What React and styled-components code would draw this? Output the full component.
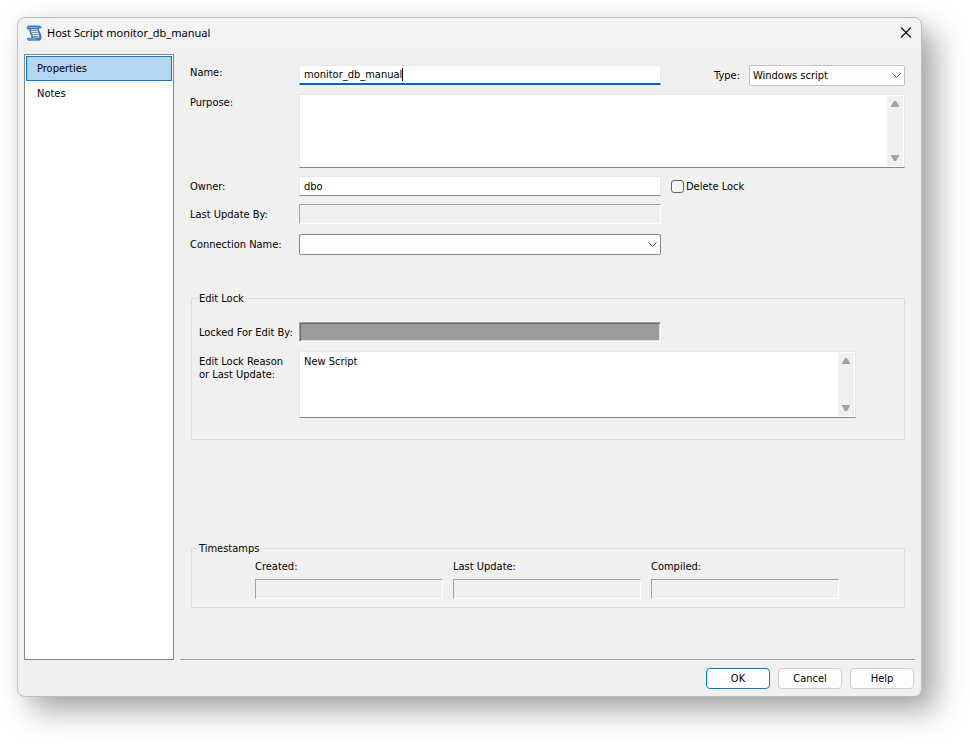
import React, { useState } from "react";
import styled, { createGlobalStyle, css } from "styled-components";

const GlobalStyle = createGlobalStyle`
  * {
    box-sizing: border-box;
  }

  body {
    margin: 0;
    background: #fff;
    color: #000;
  }

  body,
  button,
  input,
  select,
  textarea {
    font-family: "DejaVu Sans Condensed", Tahoma, sans-serif;
    font-size: 11px;
    line-height: 13px;
  }
`;

const Desktop = styled.div`
  display: flex;
  min-height: 100vh;
  padding: 17px 48px 48px 17px;
`;

const Dialog = styled.div`
  flex: 1;
  display: flex;
  flex-direction: column;
  background: #f0f0f0;
  border: 1px solid #bdbdbd;
  border-radius: 8px;
  box-shadow: 14px 14px 30px rgba(0, 0, 0, 0.34),
    0 0 16px rgba(0, 0, 0, 0.05);
`;

const TitleBar = styled.header`
  display: flex;
  align-items: center;
  gap: 4px;
  height: 30px;
  padding: 0 9px 0 8px;
  background: #f3f3f3;
  border-radius: 8px 8px 0 0;
`;

const Title = styled.h1`
  flex: 1;
  margin: 0;
  font-family: "Noto Sans", "Segoe UI", sans-serif;
  font-size: 11px;
  font-weight: 400;
  line-height: 16px;
`;

const CloseButton = styled.button`
  display: flex;
  padding: 0;
  border: none;
  background: none;
`;

const Body = styled.div`
  flex: 1;
  display: flex;
  gap: 6px;
  padding: 6px 6px 0;
`;

const Sidebar = styled.nav`
  width: 150px;
  padding: 1px;
  border: 1px solid #828790;
  background: #fff;
`;

const SidebarItem = styled.button`
  display: block;
  width: 100%;
  height: 25px;
  padding: 0 10px;
  border: 1px solid transparent;
  background: none;
  color: #000;
  text-align: left;

  ${({ $active }) =>
    $active &&
    css`
      border-color: #0078d7;
      background: #b3d7f3;
    `}
`;

const Main = styled.main`
  flex: 1;
  display: flex;
  flex-direction: column;
  padding: 11px 10px 51px;
  border-bottom: 1px solid #a0a0a0;
  box-shadow: 0 1px 0 #fff;
`;

const Form = styled.div`
  display: grid;
  grid-template-columns: 109px 1fr 88px 156px;
  row-gap: 8px;
`;

const Label = styled.label`
  grid-column: ${({ $col }) => $col || 1};
  padding-top: ${({ $top }) => $top || 4}px;
  white-space: pre-line;
`;

const TypeLabel = styled(Label)`
  padding-right: 9px;
  text-align: right;
`;

const FieldWrap = styled.div`
  position: relative;
  display: flex;
`;

const Caret = styled.span`
  position: absolute;
  left: 103px;
  top: 3px;
  width: 1px;
  height: 13px;
  background: #000;
`;

const fieldStyles = {
  plain: css`
    background: #fff;
    border-color: #e8e8e8 #e8e8e8 #868686;
  `,
  focused: css`
    background: #fff;
    border-color: #e8e8e8 #e8e8e8 #0067c0;
    border-bottom-width: 2px;
  `,
  disabled: css`
    background: #f0f0f0;
    border-color: #a0a0a0 #fff #fff #a0a0a0;
  `,
  locked: css`
    background: #9b9b9b;
    border-color: #a0a0a0 #fff #fff #a0a0a0;
    box-shadow: inset 1px 1px 0 #696969, inset -1px -1px 0 #e3e3e3;
  `,
};

const Field = styled.input`
  width: 100%;
  height: 20px;
  padding: 0 4px;
  border: 1px solid;
  border-radius: 0;
  color: #000;
  outline: none;
  ${({ $kind }) => fieldStyles[$kind || "plain"]}
`;

const SelectWrap = styled.div`
  position: relative;
  display: flex;
  margin-top: ${({ $top }) => $top || 0}px;

  svg {
    position: absolute;
    right: 4px;
    top: 7px;
    pointer-events: none;
  }
`;

const Select = styled.select`
  appearance: none;
  width: 100%;
  height: 21px;
  padding: 0 20px 0 3px;
  border: 1px solid ${({ $light }) => ($light ? "#c4c4c4" : "#868686")};
  border-radius: 2px;
  background: #fdfdfd;
  color: #000;
  outline: none;
`;

const MemoBox = styled.div`
  display: flex;
  grid-column: 2 / -1;
  height: ${({ $height }) => $height}px;
  padding: 1px 1px 1px 0;
  border: 1px solid;
  border-color: #e8e8e8 #e8e8e8 #868686;
  background: #fff;
`;

const Memo = styled.textarea`
  flex: 1;
  min-width: 0;
  margin: 0;
  padding: 2px 4px;
  border: none;
  background: none;
  color: #000;
  outline: none;
  resize: none;
  overflow: hidden;
`;

const ScrollTrack = styled.div`
  display: flex;
  flex-direction: column;
  justify-content: space-between;
  align-items: center;
  width: 16px;
  padding: 5px 0;
  background: #f0f0f0;
`;

const CheckLabel = styled.label`
  display: flex;
  align-items: center;
  gap: 2px;
  grid-column: span 2;
  padding-left: 10px;
`;

const Checkbox = styled.input`
  appearance: none;
  width: 13px;
  height: 13px;
  margin: 0;
  border: 1px solid #626262;
  border-radius: 3px;
  background: #f5f5f5;

  &:checked {
    background: #0067c0;
  }
`;

const Group = styled.fieldset`
  min-width: 0;
  margin: ${({ $margin }) => $margin};
  padding: 0 0 0 7px;
  border: 1px solid #dcdcdc;
`;

const Legend = styled.legend`
  margin-left: -1px;
  padding: 0 2px 0 1px;
`;

const LockGrid = styled.div`
  display: grid;
  grid-template-columns: 100px 1fr 195px;
  row-gap: 9px;
  padding: 17px 48px 21px 0;
`;

const LockedField = styled(Field)`
  grid-column: 2;
`;

const StampGrid = styled.div`
  display: grid;
  grid-template-columns: repeat(3, 1fr);
  gap: 10px;
  padding: 5px 65px 8px 56px;
`;

const Stamp = styled.div`
  display: flex;
  flex-direction: column;
  gap: 6px;
`;

const Footer = styled.footer`
  display: flex;
  justify-content: flex-end;
  gap: 8px;
  padding: 8px 7px 7px;
`;

const Button = styled.button`
  width: 64px;
  height: 21px;
  padding: 0;
  border: 1px solid ${({ $primary }) => ($primary ? "#0078d4" : "#cfcfcf")};
  border-radius: 4px;
  background: #fdfdfd;
  color: #000;
`;

const ScriptIcon = () => (
  <svg width="17" height="17" viewBox="0 0 17 17" fill="none" aria-hidden="true">
    <path
      d="M2.600 0.500H13c1.700 0 2.500 1.200 2.300 3H13c-.6 2 2.600 4.700 2.600 8.500 0 2.500-1 3.700-2.700 3.700H3C1.500 15.700.9 14.300 1.200 12.700h4C5.400 9.500 3 8 3.400 4.600 1.300 4.800.4 3.800.9 2 1.200 1 1.700.5 2.600.5z"
      fill="#3f7db9"
    />
    <path d="M5 4.200h6.300c0 3 2.200 5 2 8.200H7C7.200 9 4.600 7.500 5 4.200z" fill="#dce8f4" />
    <path d="M5 5.500h6M6 7.500h5.500M6.500 9.500H12M7 11.500h5.500" stroke="#6797c7" />
    <path d="M2.500 2.500h9" stroke="#84afd8" />
    <path d="M3 14h8" stroke="#84afd8" />
  </svg>
);

const CloseIcon = () => (
  <svg width="12" height="12" viewBox="0 0 12 12" aria-hidden="true">
    <path d="M1 0.500l10 10M11 .5L1 10.500" stroke="#111" strokeWidth="1.200" />
  </svg>
);

const Chevron = () => (
  <svg width="9" height="7" viewBox="0 0 9 7" fill="none" aria-hidden="true">
    <path d="M.5 1.500l4 4 4-4" stroke="#5c5c5c" />
  </svg>
);

const Arrow = ({ down }) => (
  <svg width="8" height="6" viewBox="0 0 8 6" aria-hidden="true">
    <path
      d={down ? "M0 0h8v1L5 6H3L0 1z" : "M0 6h8V5L5 0H3L0 5z"}
      fill="#a3a3a3"
    />
  </svg>
);

const Scroll = () => (
  <ScrollTrack>
    <Arrow />
    <Arrow down />
  </ScrollTrack>
);

const pages = ["Properties", "Notes"];
const stamps = ["Created:", "Last Update:", "Compiled:"];

const App = () => {
  const [page, setPage] = useState("Properties");

  return (
    <Desktop>
      <GlobalStyle />
      <Dialog role="dialog" aria-labelledby="title">
        <TitleBar>
          <ScriptIcon />
          <Title id="title">Host Script monitor_db_manual</Title>
          <CloseButton type="button" aria-label="Close">
            <CloseIcon />
          </CloseButton>
        </TitleBar>

        <Body>
          <Sidebar>
            {pages.map((name) => (
              <SidebarItem
                key={name}
                type="button"
                $active={name === page}
                onClick={() => setPage(name)}
              >
                {name}
              </SidebarItem>
            ))}
          </Sidebar>

          <Main>
            <Form>
              <Label htmlFor="name" $top={1}>Name:</Label>
              <FieldWrap>
                <Field id="name" $kind="focused" defaultValue="monitor_db_manual" />
                <Caret />
              </FieldWrap>
              <TypeLabel htmlFor="type" $col={3}>Type:</TypeLabel>
              <SelectWrap>
                <Select id="type" $light>
                  <option>Windows script</option>
                </Select>
                <Chevron />
              </SelectWrap>

              <Label htmlFor="purpose" $top={2}>Purpose:</Label>
              <MemoBox $height={74}>
                <Memo id="purpose" />
                <Scroll />
              </MemoBox>

              <Label htmlFor="owner">Owner:</Label>
              <Field id="owner" defaultValue="dbo" />
              <CheckLabel>
                <Checkbox type="checkbox" />
                Delete Lock
              </CheckLabel>

              <Label htmlFor="updatedBy">Last Update By:</Label>
              <Field id="updatedBy" $kind="disabled" disabled />

              <Label htmlFor="connection" $top={6}>Connection Name:</Label>
              <SelectWrap $top={2}>
                <Select id="connection" />
                <Chevron />
              </SelectWrap>
            </Form>

            <Group $margin="37px 0 0 1px">
              <Legend>Edit Lock</Legend>
              <LockGrid>
                <Label htmlFor="lockedBy">Locked For Edit By:</Label>
                <LockedField id="lockedBy" $kind="locked" disabled />
                <Label htmlFor="reason">{"Edit Lock Reason\nor Last Update:"}</Label>
                <MemoBox $height={67}>
                  <Memo id="reason" defaultValue="New Script" />
                  <Scroll />
                </MemoBox>
              </LockGrid>
            </Group>

            <Group $margin="auto 0 0 1px">
              <Legend>Timestamps</Legend>
              <StampGrid>
                {stamps.map((name) => (
                  <Stamp key={name}>
                    <label htmlFor={name}>{name}</label>
                    <Field id={name} $kind="disabled" disabled />
                  </Stamp>
                ))}
              </StampGrid>
            </Group>
          </Main>
        </Body>

        <Footer>
          <Button type="button" $primary>OK</Button>
          <Button type="button">Cancel</Button>
          <Button type="button">Help</Button>
        </Footer>
      </Dialog>
    </Desktop>
  );
};

export default App;
